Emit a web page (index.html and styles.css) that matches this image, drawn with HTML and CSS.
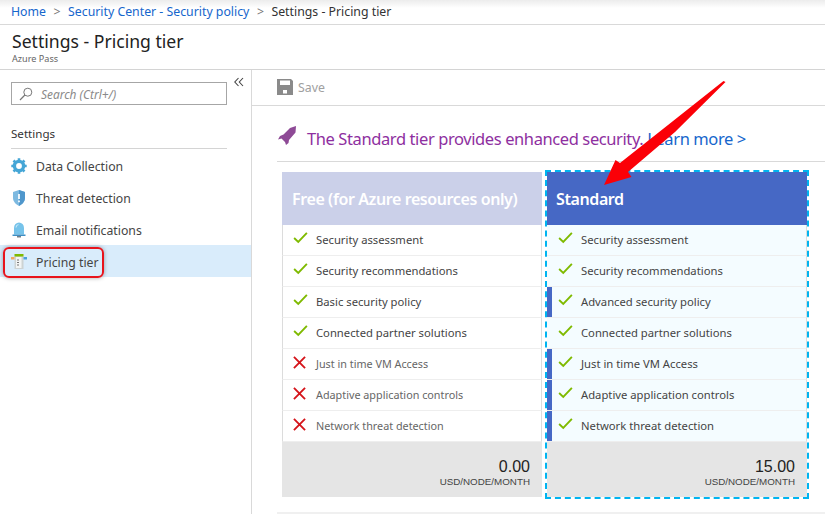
FILE: index.html
```html
<!DOCTYPE html>
<html>
<head>
  <meta charset="UTF-8">
  <meta name="viewport" content="width=device-width, initial-scale=1">
  <title>Settings - Pricing tier</title>
  <link rel="stylesheet" href="styles.css">
</head>
<body>
  <svg width="0" height="0" class="defs">
    <symbol id="check" viewBox="0 0 16 12"><path d="M1.200 6.500 5.600 10.600 14.800 1" fill="none" stroke="#7fba00" stroke-width="2"/></symbol>
    <symbol id="cross" viewBox="0 0 14 14"><path d="M1 1 13 13M13 1 1 13" fill="none" stroke="#d5141a" stroke-width="2"/></symbol>
  </svg>

  <div class="crumbs">
    <a href="#">Home</a><span class="sep">&gt;</span><a href="#">Security Center - Security policy</a><span class="sep">&gt;</span><span>Settings - Pricing tier</span>
  </div>

  <div class="title-block">
    <h1>Settings - Pricing tier</h1>
    <div class="subtitle">Azure Pass</div>
  </div>

  <div class="main">
    <div class="sidebar">
      <div class="search-row">
        <div class="search">
          <svg width="14" height="14" viewBox="0 0 14 14"><circle cx="8.800" cy="5.200" r="4" fill="none" stroke="#777" stroke-width="1"/><path d="M5.900 8 1 13" stroke="#777" stroke-width="1.200"/></svg>
          <span>Search (Ctrl+/)</span>
        </div>
        <svg class="collapse" width="10" height="10" viewBox="0 0 10 10"><path d="M4.500 1 .8 5 4.500 9M9 1 5.300 5 9 9" fill="none" stroke="#444" stroke-width="1.100"/></svg>
      </div>
      <div class="side-title">Settings</div>
      <div class="side-item">
        <svg width="16" height="16" viewBox="0 0 16 16"><circle cx="8" cy="8" r="4.600" fill="none" stroke="#45a6d6" stroke-width="3.400"/><path d="M8 .3V3M8 13v2.700M.3 8H3M13 8h2.700M2.500 2.500l2 2M11.500 11.500l2 2M13.500 2.500l-2 2M4.500 11.500l-2 2" stroke="#45a6d6" stroke-width="2.600"/></svg>
        Data Collection
      </div>
      <div class="side-item">
        <svg width="16" height="16" viewBox="0 0 16 16"><path d="M8 0 14 2V8c0 3.500-2.800 6.300-6 8C4.800 14.300 2 11.500 2 8V2Z" fill="#7db9e0"/><path d="M8 0 14 2V8c0 3.500-2.800 6.300-6 8Z" fill="#4f97cc"/><path d="M8 4v5M8 10.500v1.800" stroke="#fff" stroke-width="1.700"/></svg>
        Threat detection
      </div>
      <div class="side-item">
        <svg width="16" height="16" viewBox="0 0 16 16"><path d="M3 12.500V6a5 5.500 0 0 1 10 0v6.500Z" fill="#76c3ea"/><path d="M5 5.500a3 3.500 0 0 1 2.500-3" fill="none" stroke="#c4e6f6" stroke-width="1.200"/><path d="M1.500 12.500h13V14h-13Z" fill="#3f8fc4"/><path d="M6 14h4v1.500H6Z" fill="#6f7f8a"/></svg>
        Email notifications
      </div>
      <div class="side-item active">
        <svg width="16" height="16" viewBox="0 0 16 16"><path d="M3.500 2h9v13h-9Z" fill="#cdd3d3"/><path d="M5 3h5.500v11H5Z" fill="#f2f4f4"/><path d="M3.500 0h9v2.500h-9Z" fill="#7fba00"/><path d="M0 3h3.500v2.500H0Z" fill="#f0a860"/><path d="M12.500 3H16v2.500h-3.500Z" fill="#4a9fdc"/><path d="M6 6h2M6 8.500h2M6 11h2" stroke="#777" stroke-width="1"/></svg>
        Pricing tier
        <div class="red-box"></div>
      </div>
    </div>

    <div class="content">
      <div class="toolbar">
        <svg width="16" height="16" viewBox="0 0 16 16"><path fill-rule="evenodd" d="M0 0h14l2 2v14H0ZM3 1.500V6h10V1.500ZM6 11v3.500h4V11Z" fill="#8a8a8a"/></svg>
        <span>Save</span>
      </div>
      <div class="banner">
        <svg width="20" height="20" viewBox="0 0 20 20"><path d="M19 0 18.500 6.500 12 14 11.500 17 9 19 8 16 4.500 12.500 1 13.500 3 10 6.500 8.500 13 2Z" fill="#8e4a96"/></svg>
        <span class="banner-text">The Standard tier provides enhanced security. <a href="#">Learn more &gt;</a></span>
      </div>
      <div class="tiers">
        <div class="tier free">
          <div class="tier-head">Free (for Azure resources only)</div>
          <div class="row"><svg class="mark"><use href="#check"/></svg>Security assessment</div>
          <div class="row"><svg class="mark"><use href="#check"/></svg>Security recommendations</div>
          <div class="row"><svg class="mark"><use href="#check"/></svg>Basic security policy</div>
          <div class="row"><svg class="mark"><use href="#check"/></svg>Connected partner solutions</div>
          <div class="row off"><svg class="mark"><use href="#cross"/></svg>Just in time VM Access</div>
          <div class="row off"><svg class="mark"><use href="#cross"/></svg>Adaptive application controls</div>
          <div class="row off"><svg class="mark"><use href="#cross"/></svg>Network threat detection</div>
          <div class="price"><b>0.00</b><small>USD/NODE/MONTH</small></div>
        </div>
        <div class="tier standard">
          <div class="tier-head">Standard</div>
          <div class="row"><svg class="mark"><use href="#check"/></svg>Security assessment</div>
          <div class="row"><svg class="mark"><use href="#check"/></svg>Security recommendations</div>
          <div class="row extra"><svg class="mark"><use href="#check"/></svg>Advanced security policy</div>
          <div class="row"><svg class="mark"><use href="#check"/></svg>Connected partner solutions</div>
          <div class="row extra"><svg class="mark"><use href="#check"/></svg>Just in time VM Access</div>
          <div class="row extra"><svg class="mark"><use href="#check"/></svg>Adaptive application controls</div>
          <div class="row extra"><svg class="mark"><use href="#check"/></svg>Network threat detection</div>
          <div class="price"><b>15.00</b><small>USD/NODE/MONTH</small></div>
        </div>
      </div>
      <div class="bottom-line"></div>
    </div>
  </div>

  <svg class="arrow" width="825" height="514" viewBox="0 0 825 514"><path d="M725.500 82 675 132 628 172 631.500 177 604 185 615.500 160 620 163 668 125 723.500 81Z" fill="#fb0007"/></svg>
</body>
</html>
```

FILE: styles.css
```css
* {
  box-sizing: border-box;
}

body {
  margin: 0;
  width: 825px;
  height: 514px;
  overflow: hidden;
  position: relative;
  background-color: #fff;
  color: #333;
  font-family: "Noto Sans", Arial, sans-serif;
  font-size: 12px;
}

a {
  color: #1666cc;
  text-decoration: none;
}

.defs {
  display: block;
  height: 0;
}

.crumbs {
  height: 25px;
  padding: 0 0 2px 11px;
  display: flex;
  align-items: center;
  border-bottom: 1px solid #d9d9d9;
  background: linear-gradient(#ececec, #fff 8px);
  font-size: 12.300px;
}

.sep {
  margin: 0 7.500px;
  color: #777;
}

.title-block {
  height: 45px;
  padding: 4px 0 0 12px;
  border-bottom: 1px solid #d4d4d4;
}

h1 {
  margin: 0;
  font-size: 17.600px;
  font-weight: 400;
  line-height: 24px;
  color: #222;
}

.subtitle {
  font-size: 9.100px;
  line-height: 12px;
  color: #666;
}

.main {
  display: flex;
  height: 444px;
}

.sidebar {
  width: 252px;
  flex: none;
  border-right: 1px solid #d9d9d9;
}

.search-row {
  display: flex;
  padding: 7px 0 0 11px;
  gap: 7px;
}

.search {
  width: 216px;
  height: 23px;
  margin-top: 5px;
  display: flex;
  align-items: center;
  gap: 8px;
  padding-left: 7px;
  border: 1px solid #a6a6a6;
  color: #8a8a8a;
  font-style: italic;
  font-size: 11.900px;
}

.side-title {
  margin: 20px 24px 0 11px;
  height: 24px;
  line-height: 18px;
  border-bottom: 1px solid #d4d4d4;
  font-size: 11.600px;
  color: #333;
}

.side-item {
  height: 32px;
  padding: 2px 0 0 11px;
  display: flex;
  align-items: center;
  gap: 9px;
  font-size: 12.250px;
  color: #444;
  position: relative;
}

.side-item.active {
  background-color: #d9ecfb;
}

.red-box {
  position: absolute;
  left: 3px;
  top: 2px;
  width: 101px;
  height: 31px;
  border: 2px solid #e8141c;
  border-radius: 6px;
  box-shadow: 0 0 4px rgba(0, 0, 0, 0.35);
}

.content {
  flex: 1;
  padding-left: 25px;
}

.toolbar {
  height: 36px;
  margin-left: -25px;
  padding: 0 0 1px 25px;
  display: flex;
  align-items: center;
  gap: 5px;
  border-bottom: 1px solid #d9d9d9;
  color: #a0a0a0;
  font-size: 12.300px;
}

.banner {
  height: 56px;
  padding-top: 20px;
  display: flex;
  gap: 10px;
  border-bottom: 1px solid #d9d9d9;
}

.banner-text {
  font-size: 16.500px;
  letter-spacing: -0.400px;
  line-height: 26px;
  color: #8e2fa0;
}

.tiers {
  display: flex;
  gap: 3px;
  margin: 8px 0 0 5px;
  align-items: flex-start;
}

.tier {
  width: 260px;
  margin-top: 2px;
}

.standard {
  width: 264px;
  margin-top: 0;
  border: 2px dashed #00b4f0;
}

.tier-head {
  height: 53px;
  padding: 14px 0 0 10px;
  background-color: #cbd0e9;
  color: #fff;
  font-size: 16px;
  letter-spacing: -0.400px;
  font-weight: 600;
  line-height: 26px;
}

.standard .tier-head {
  padding-left: 9px;
  background-color: #4668c5;
}

.row {
  height: 31px;
  padding: 0 0 2px 33px;
  display: flex;
  align-items: center;
  position: relative;
  border-left: 1px solid #dcdcdc;
  border-right: 1px solid #dcdcdc;
  border-bottom: 1px solid #eeeeee;
  font-size: 11.250px;
  color: #444;
}

.standard .row {
  padding-left: 34px;
  background-color: #f4fcff;
  border-left: 0;
}

.row.off {
  font-size: 10.800px;
  color: #666;
}

.row.extra::before {
  content: "";
  position: absolute;
  left: 0;
  top: 0;
  bottom: 0;
  width: 5px;
  background-color: #4668c5;
}

.mark {
  position: absolute;
  left: 10px;
  top: 6px;
  width: 15px;
  height: 13px;
}

.standard .mark {
  left: 11px;
}

.off .mark {
  top: 7px;
  left: 9px;
}

.price {
  height: 55px;
  padding: 15px 12px 0 0;
  display: flex;
  flex-direction: column;
  align-items: flex-end;
  background-color: #e5e5e5;
  font-family: "Liberation Sans", Arial, sans-serif;
}

.price b {
  font-size: 16px;
  font-weight: 400;
  line-height: 19px;
  color: #222;
}

.price small {
  font-size: 9.800px;
  line-height: 12px;
  color: #444;
}

.bottom-line {
  height: 2px;
  margin-top: 13px;
  background-color: #f0f0f0;
}

.arrow {
  position: absolute;
  left: 0;
  top: 0;
  pointer-events: none;
}
```
